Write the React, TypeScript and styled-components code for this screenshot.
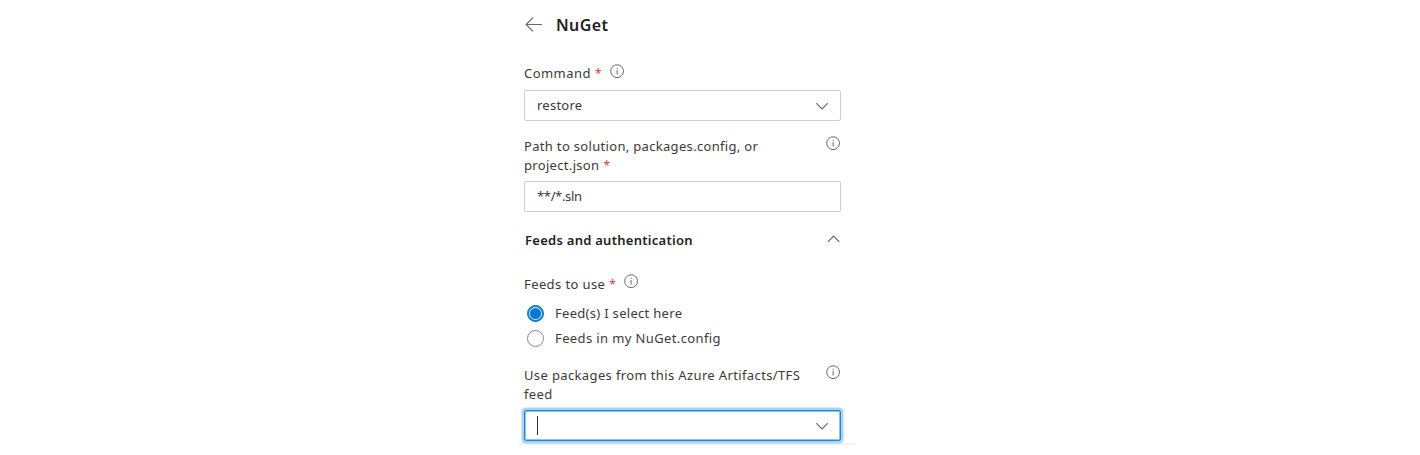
import React from "react";
import styled, { createGlobalStyle } from "styled-components";

const Global = createGlobalStyle`
  * { box-sizing: border-box; }
  body { margin: 0; background: #fff; overflow: hidden; }
`;

const Page = styled.main`
  height: 455px;
  padding-left: 519px;
  font-family: "Noto Sans", "Open Sans", sans-serif;
  font-size: 13px;
  line-height: 19px;
  color: #3b3a39;
`;

const Panel = styled.section`
  width: 336px;
  height: 445px;
  padding: 0 14px 0 5px;
  border-bottom: 2px solid #f3f3f3;
`;

const Header = styled.header`
  display: flex;
  align-items: center;
  gap: 13px;
  height: 50px;
  padding-left: 1px;
`;

const Title = styled.h1`
  margin: 0;
  font-size: 16px;
  font-weight: 600;
  line-height: 24px;
  color: #201f1e;
  letter-spacing: 0.4px;
`;

const Text = styled.span<{ $spacing?: number }>`
  display: block;
  white-space: nowrap;
  letter-spacing: ${(p) => p.$spacing ?? 0.35}px;
`;

const Label = styled.div<{ $top: number; $spread?: boolean }>`
  display: flex;
  align-items: flex-start;
  justify-content: ${(p) => (p.$spread ? "space-between" : "flex-start")};
  gap: 8px;
  padding-top: ${(p) => p.$top}px;
`;

const Required = styled.span`
  margin-left: 4px;
  font-size: 12px;
  line-height: 1;
  letter-spacing: 0;
  color: #d93a3a;
`;

const Field = styled.div<{ $top: number; $focused?: boolean }>`
  display: flex;
  align-items: center;
  justify-content: space-between;
  height: 31px;
  margin-top: ${(p) => p.$top}px;
  padding: 0 11px 0 12px;
  border: 1px solid ${(p) => (p.$focused ? "#2088d8" : "#cfcecd")};
  border-radius: 2px;
  box-shadow: ${(p) => (p.$focused ? "inset 0 0 0 0.5px #2088d8, 0 0 0 2.5px #a9d3f2" : "none")};
`;

const Caret = styled.span`
  width: 1px;
  height: 19px;
  background: #333;
`;

const SectionHeader = styled.div`
  display: flex;
  align-items: center;
  justify-content: space-between;
  height: 20px;
  margin-top: 18px;
  padding: 0 0 0 1px;

  svg {
    margin-bottom: 2px;
  }
`;

const SectionTitle = styled.h2`
  margin: 0;
  font-size: 13px;
  font-weight: 600;
  line-height: 20px;
  color: #201f1e;
  letter-spacing: 0.27px;
`;

const Options = styled.div`
  display: grid;
  grid-auto-rows: 25px;
  padding: 7px 0 0 3px;
`;

const Option = styled.div`
  display: flex;
  align-items: center;
  gap: 11px;
`;

const Radio = styled.span<{ $checked?: boolean }>`
  width: 17px;
  height: 17px;
  border: 1px solid ${(p) => (p.$checked ? "#0078d4" : "#8a8886")};
  border-radius: 50%;
  background: ${(p) => (p.$checked ? "#0078d4" : "#fff")};
  box-shadow: ${(p) => (p.$checked ? "inset 0 0 0 1px #0078d4, inset 0 0 0 2px #d5e9f8" : "none")};
`;

const Icon = styled.svg<{ $lift?: number }>`
  display: block;
  flex: none;
  fill: none;
  stroke: #6b6967;
  margin-top: ${(p) => -(p.$lift ?? 0)}px;
`;

const InfoIcon = ({ lift }: { lift?: number }) => (
  <Icon $lift={lift} width="15" height="15" viewBox="0 0 15 15">
    <circle cx="7.1" cy="7.2" r="6.4" />
    <path d="M7.1 6v4.5M7.1 3.8v1.2" />
  </Icon>
);

const Chevron = ({ up }: { up?: boolean }) => (
  <Icon width="14" height="8" viewBox="0 0 14 8" strokeWidth="1.2">
    <path d={up ? "M.9 6.8 6.6 1.1l5.7 5.7" : "M1.2 1.2 7 7l5.8-5.8"} />
  </Icon>
);

export default function App() {
  return (
    <Page>
      <Global />
      <Panel>
        <Header>
          <Icon width="18" height="16" viewBox="0 0 18 16" strokeWidth="1.2">
            <path d="M17 7.5H1.2M8 .7 1.2 7.5 8 14.3" />
          </Icon>
          <Title>NuGet</Title>
        </Header>

        <Label $top={14}>
          <Text $spacing={0.45}>Command<Required>*</Required></Text>
          <InfoIcon />
        </Label>
        <Field $top={7}>
          <Text $spacing={0.25}>restore</Text>
          <Chevron />
        </Field>

        <Label $top={16} $spread>
          <div>
            <Text $spacing={0.32}>Path to solution, packages.config, or</Text>
            <Text $spacing={0.32}>project.json<Required>*</Required></Text>
          </div>
          <InfoIcon lift={1} />
        </Label>
        <Field $top={6}>
          <Text $spacing={-0.35}>**/*.sln</Text>
        </Field>

        <SectionHeader>
          <SectionTitle>Feeds and authentication</SectionTitle>
          <Chevron up />
        </SectionHeader>

        <Label $top={25}>
          <Text $spacing={0.4}>Feeds to use<Required>*</Required></Text>
          <InfoIcon lift={1} />
        </Label>
        <Options>
          <Option>
            <Radio $checked />
            <Text $spacing={0.3}>Feed(s) I select here</Text>
          </Option>
          <Option>
            <Radio />
            <Text $spacing={0.38}>Feeds in my NuGet.config</Text>
          </Option>
        </Options>

        <Label $top={15} $spread>
          <div>
            <Text $spacing={0.37}>Use packages from this Azure Artifacts/TFS</Text>
            <Text>feed</Text>
          </div>
          <InfoIcon lift={1} />
        </Label>
        <Field $top={6} $focused>
          <Caret />
          <Chevron />
        </Field>
      </Panel>
    </Page>
  );
}
